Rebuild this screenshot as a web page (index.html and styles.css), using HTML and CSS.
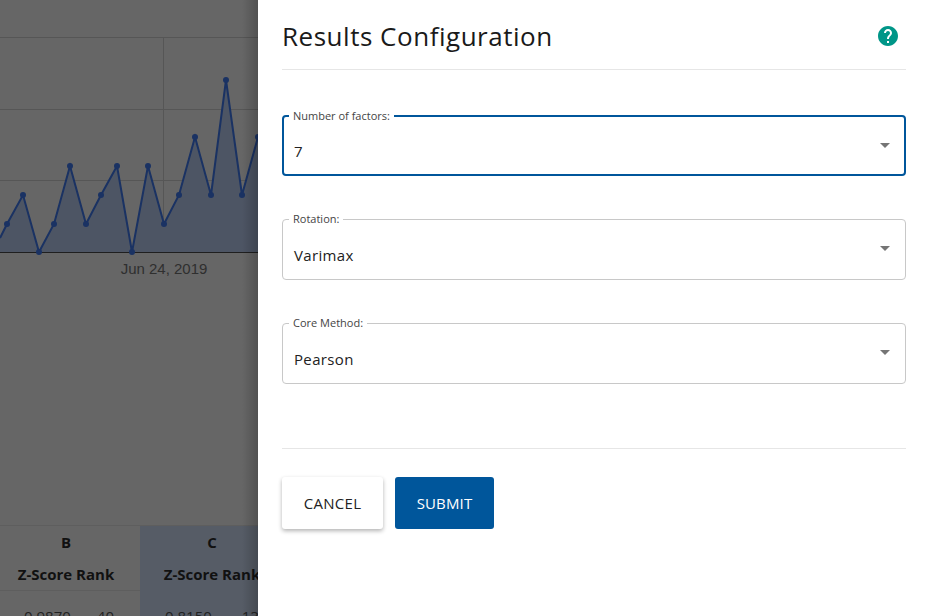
FILE: index.html
```html
<!DOCTYPE html>
<html lang="en">
<head>
<meta charset="utf-8">
<title>Results Configuration</title>
<link rel="stylesheet" href="styles.css">
</head>
<body>
<div class="page">
  <div class="behind">
    <svg class="chart" width="258" height="288" viewBox="0 0 258 288">
      <g class="grid">
        <line x1="0" y1="37.5" x2="258" y2="37.5"/>
        <line x1="0" y1="109.5" x2="258" y2="109.5"/>
        <line x1="0" y1="180.5" x2="258" y2="180.5"/>
        <line x1="163.5" y1="37" x2="163.5" y2="252"/>
      </g>
      <polygon class="area" points="0,238 7,224 23,195 39,252 54,224 70,166 86,224 101,195 117,166 132,252 148,166 164,224 179,195 195,137 211,195 226,80 242,195 258,137 258,252 0,252"/>
      <line class="axis" x1="0" y1="252.5" x2="258" y2="252.5"/>
      <polyline class="line" points="0,238 7,224 23,195 39,252 54,224 70,166 86,224 101,195 117,166 132,252 148,166 164,224 179,195 195,137 211,195 226,80 242,195 258,137"/>
      <g class="dots">
        <circle cx="7" cy="224" r="3"/><circle cx="23" cy="195" r="3"/><circle cx="39" cy="252" r="3"/>
        <circle cx="54" cy="224" r="3"/><circle cx="70" cy="166" r="3"/><circle cx="86" cy="224" r="3"/>
        <circle cx="101" cy="195" r="3"/><circle cx="117" cy="166" r="3"/><circle cx="132" cy="252" r="3"/>
        <circle cx="148" cy="166" r="3"/><circle cx="164" cy="224" r="3"/><circle cx="179" cy="195" r="3"/>
        <circle cx="195" cy="137" r="3"/><circle cx="211" cy="195" r="3"/><circle cx="226" cy="80" r="3"/>
        <circle cx="242" cy="195" r="3"/><circle cx="258" cy="137" r="3"/>
      </g>
      <text class="tick" x="164" y="274" text-anchor="middle">Jun 24, 2019</text>
    </svg>
    <div class="table">
      <div class="col col-b">
        <div class="head">
          <div class="letter">B</div>
          <div class="sub">Z-Score Rank</div>
        </div>
        <div class="vals"><span>0.9870</span><span>40</span></div>
      </div>
      <div class="col col-c">
        <div class="head">
          <div class="letter">C</div>
          <div class="sub">Z-Score Rank</div>
        </div>
        <div class="vals"><span>0.8150</span><span>13</span></div>
      </div>
    </div>
  </div>
  <aside class="drawer">
    <header class="drawer-head">
      <h1 class="title">Results Configuration</h1>
      <svg class="help" width="24" height="24" viewBox="0 0 24 24"><path d="M12 2C6.48 2 2 6.48 2 12s4.48 10 10 10 10-4.48 10-10S17.52 2 12 2zm1 17h-2v-2h2v2zm2.07-7.75l-.9.92C13.45 12.9 13 13.5 13 15h-2v-.5c0-1.1.45-2.1 1.17-2.83l1.24-1.26c.37-.36.59-.86.59-1.41 0-1.1-.9-2-2-2s-2 .9-2 2H8c0-2.21 1.79-4 4-4s4 1.79 4 4c0 .88-.36 1.68-.93 2.25z"/></svg>
    </header>
    <form class="fields">
      <fieldset class="field field-focus">
        <legend class="field-label">Number of factors:</legend>
        <div class="field-row"><span class="field-value">7</span><span class="arrow"></span></div>
      </fieldset>
      <fieldset class="field">
        <legend class="field-label">Rotation:</legend>
        <div class="field-row"><span class="field-value">Varimax</span><span class="arrow"></span></div>
      </fieldset>
      <fieldset class="field">
        <legend class="field-label">Core Method:</legend>
        <div class="field-row"><span class="field-value">Pearson</span><span class="arrow"></span></div>
      </fieldset>
    </form>
    <div class="actions">
      <button class="btn btn-cancel" type="button">CANCEL</button>
      <button class="btn btn-submit" type="button">SUBMIT</button>
    </div>
  </aside>
</div>
</body>
</html>
```
FILE: styles.css
```css
* { box-sizing: border-box; }
html, body { margin: 0; padding: 0; height: 100%; }
body { font-family: "Open Sans", sans-serif; overflow: hidden; }
.page { display: flex; width: 930px; height: 616px; overflow: hidden; }

.behind { position: relative; width: 258px; flex: none; background: #666; display: flex; flex-direction: column; overflow: hidden; }
.behind::after { content: ""; position: absolute; top: 0; right: 0; bottom: 0; width: 16px; background: linear-gradient(to right, rgba(0,0,0,0), rgba(0,0,0,.2)); }
.chart { display: block; flex: none; }
.grid line { stroke: #565656; stroke-width: 1; }
.area { fill: #4d5564; }
.axis { stroke: #1f1f1f; stroke-width: 1; }
.line { fill: none; stroke: #1a3263; stroke-width: 2; }
.dots circle { fill: #1a3263; }
.tick { font-family: "Liberation Sans", sans-serif; font-size: 15px; fill: #2f2f2f; }

.table { margin: 237px 0 0 -8px; display: grid; grid-template-columns: 148px 144px; border-top: 1px solid #5e5e5e; height: 91px; }
.col { padding-top: 6px; color: #111; }
.col-c { background: #565c66; }
.head { text-align: center; font-weight: 700; font-size: 15px; height: 59px; border-bottom: 1px solid #5e5e5e; white-space: nowrap; }
.col-c .head { border-bottom-color: #565c66; }
.letter { line-height: 20px; }
.sub { margin-top: 12px; line-height: 20px; }
.vals { display: flex; gap: 30px; justify-content: center; font-size: 15px; color: #222; padding-top: 15px; }
.col-b .vals { gap: 26px; padding-left: 6px; }

.drawer { flex: 1; background: #fff; padding: 0 24px; display: flex; flex-direction: column; }
.drawer-head { display: flex; align-items: center; justify-content: space-between; height: 70px; border-bottom: 1px solid #e6e6e6; padding: 4px 6px 0 0; }
.title { margin: 0; font-size: 26px; font-weight: 400; letter-spacing: .52px; color: #1a1a1a; line-height: 1; position: relative; top: -1px; }
.help { fill: #009688; position: relative; top: -1px; }

.fields { display: flex; flex-direction: column; gap: 36px; padding-top: 39px; height: 379px; border-bottom: 1px solid #e6e6e6; }
.field { margin: 0; padding: 0 10px; height: 68px; flex: none; border: 1px solid #c8c8c8; border-radius: 4px; min-width: 0; }
.field-focus { height: 67px; border: 2px solid #00569b; padding: 0 9px; }
.field-label { padding: 0 4px; margin-left: -4px; font-size: 11px; line-height: 14px; color: #444; }
.field-row { display: flex; align-items: center; justify-content: space-between; height: 46px; padding: 12px 5px 0 1px; }
.field-focus .field-row { padding-top: 10px; }
.field-value { font-size: 15px; color: #222; letter-spacing: .35px; }
.arrow { width: 0; height: 0; border-left: 5px solid transparent; border-right: 5px solid transparent; border-top: 5px solid #757575; margin-top: -14px; }
.field-focus .arrow { margin-top: -12px; }

.actions { display: flex; gap: 12px; padding-top: 28px; }
.btn { height: 52px; border: 0; border-radius: 3px; font-family: inherit; font-size: 15px; font-weight: 500; letter-spacing: .3px; padding: 0; }
.btn-cancel { width: 101px; background: #fff; color: #222; box-shadow: 0 2px 4px rgba(0,0,0,.3); }
.btn-submit { width: 99px; background: #00569b; color: #fff; letter-spacing: .15px; }
```
